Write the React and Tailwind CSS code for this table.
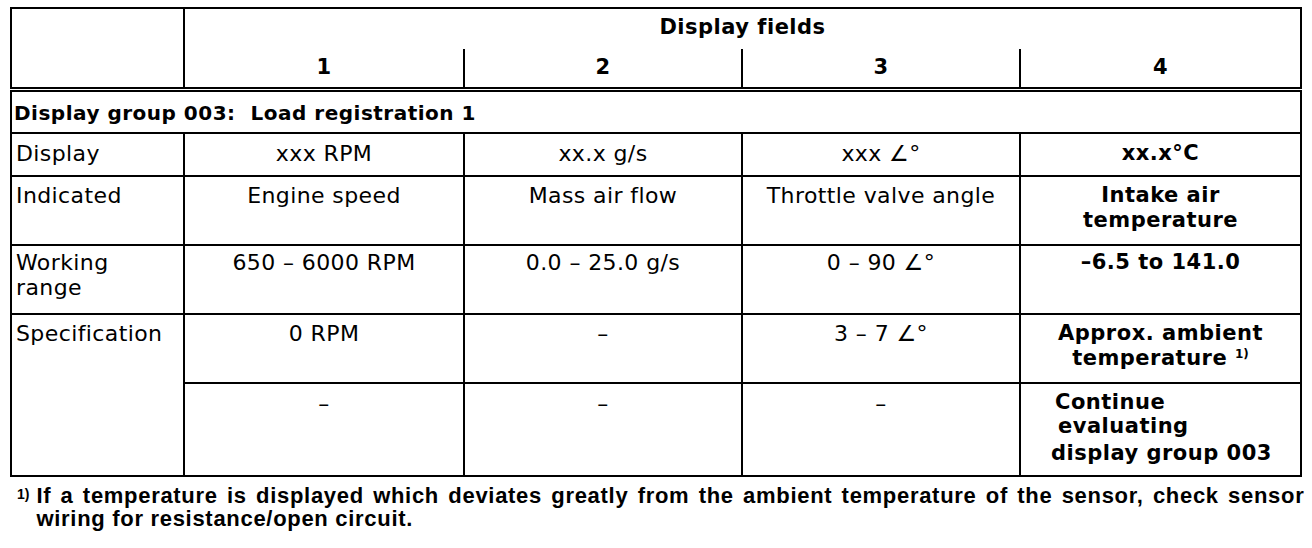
import React from 'react';

const rows = [
  {
    label: 'Display',
    height: 'h-[43px]',
    pad: 'pt-[7px]',
    cells: ['xxx RPM', 'xx.x g/s', 'xxx ∠°', 'xx.x°C'],
  },
  {
    label: 'Indicated',
    height: 'h-[69px]',
    pad: 'pt-[6px]',
    cells: ['Engine speed', 'Mass air flow', 'Throttle valve angle', <>Intake air<br />temperature</>],
  },
  {
    label: <>Working<br />range</>,
    height: 'h-[69px]',
    pad: 'pt-[4px]',
    cells: ['650 – 6000 RPM', '0.0 – 25.0 g/s', '0 – 90 ∠°', '–6.5 to 141.0'],
  },
];

const cell = 'border-2 border-black align-top px-[4px]';
const bold = 'font-bold text-[21px] tracking-[0.5px]';

export default function App() {
  return (
    <div className="w-[1312px] h-[548px] overflow-hidden bg-white text-black font-['DejaVu_Sans',sans-serif] text-[22px] leading-[25px] tracking-[0.4px]">
      <table className="ml-[10px] mt-[7px] w-[1290px] table-fixed border-collapse">
        <colgroup>
          <col className="w-[173px]" />
          <col className="w-[280px]" />
          <col className="w-[278px]" />
          <col className="w-[278px]" />
          <col className="w-[281px]" />
        </colgroup>
        <tbody>
          <tr className="h-[41px]">
            <td rowSpan={2} className="border-2 border-black border-b-[5px] [border-bottom-style:double]"></td>
            <td colSpan={4} className={`border-2 border-b-0 border-black pt-[6px] text-center align-top ${bold}`}>
              Display fields
            </td>
          </tr>
          <tr className="h-[40px]">
            {['1', '2', '3', '4'].map((n) => (
              <td
                key={n}
                className={`border-2 border-t-0 border-black border-b-[5px] [border-bottom-style:double] pt-[6px] text-center align-top ${bold}`}
              >
                {n}
              </td>
            ))}
          </tr>
          <tr className="h-[44px]">
            <td colSpan={5} className="border-2 border-t-0 border-black px-[2px] pt-[9px] align-top font-bold text-[20px] tracking-[0.5px]">
              Display group 003:&nbsp; Load registration 1
            </td>
          </tr>
          {rows.map((r, i) => (
            <tr key={i} className={r.height}>
              <td className={`${cell} ${r.pad}`}>{r.label}</td>
              {r.cells.map((c, j) => (
                <td key={j} className={`${cell} ${r.pad} text-center ${j === 3 ? bold : ''}`}>
                  {c}
                </td>
              ))}
            </tr>
          ))}
          <tr className="h-[69px]">
            <td rowSpan={2} className={`${cell} pt-[6px]`}>Specification</td>
            <td className={`${cell} pt-[6px] text-center`}>0 RPM</td>
            <td className={`${cell} pt-[6px] text-center`}>–</td>
            <td className={`${cell} pt-[6px] text-center`}>3 – 7 ∠°</td>
            <td className={`${cell} pt-[6px] text-center ${bold}`}>
              Approx. ambient
              <br />
              temperature <sup className="text-[12px] -top-[0.6em] tracking-normal">1)</sup>
            </td>
          </tr>
          <tr className="h-[93px]">
            <td className={`${cell} pt-[7px] text-center`}>–</td>
            <td className={`${cell} pt-[7px] text-center`}>–</td>
            <td className={`${cell} pt-[7px] text-center`}>–</td>
            <td className={`${cell} pt-[7px] pl-[34px] ${bold}`}>
              <div className="leading-[23px]">Continue</div>
              <div className="leading-[24px] pl-[3px]">evaluating</div>
              <div className="leading-[30px] -ml-[4px]">display group 003</div>
            </td>
          </tr>
        </tbody>
      </table>
      <div className="flex mt-[7px] pl-[17px] font-['Liberation_Sans',sans-serif] font-bold text-[22px] leading-[23px] tracking-[0.7px]">
        <sup className="text-[14px] tracking-normal top-[3px] mr-[7px] self-start leading-[14px]">1)</sup>
        <div>
          <p className="w-[1268px] text-justify [text-align-last:justify] whitespace-nowrap">
            If a temperature is displayed which deviates greatly from the ambient temperature of the sensor, check sensor
          </p>
          <p>wiring for resistance/open circuit.</p>
        </div>
      </div>
    </div>
  );
}
